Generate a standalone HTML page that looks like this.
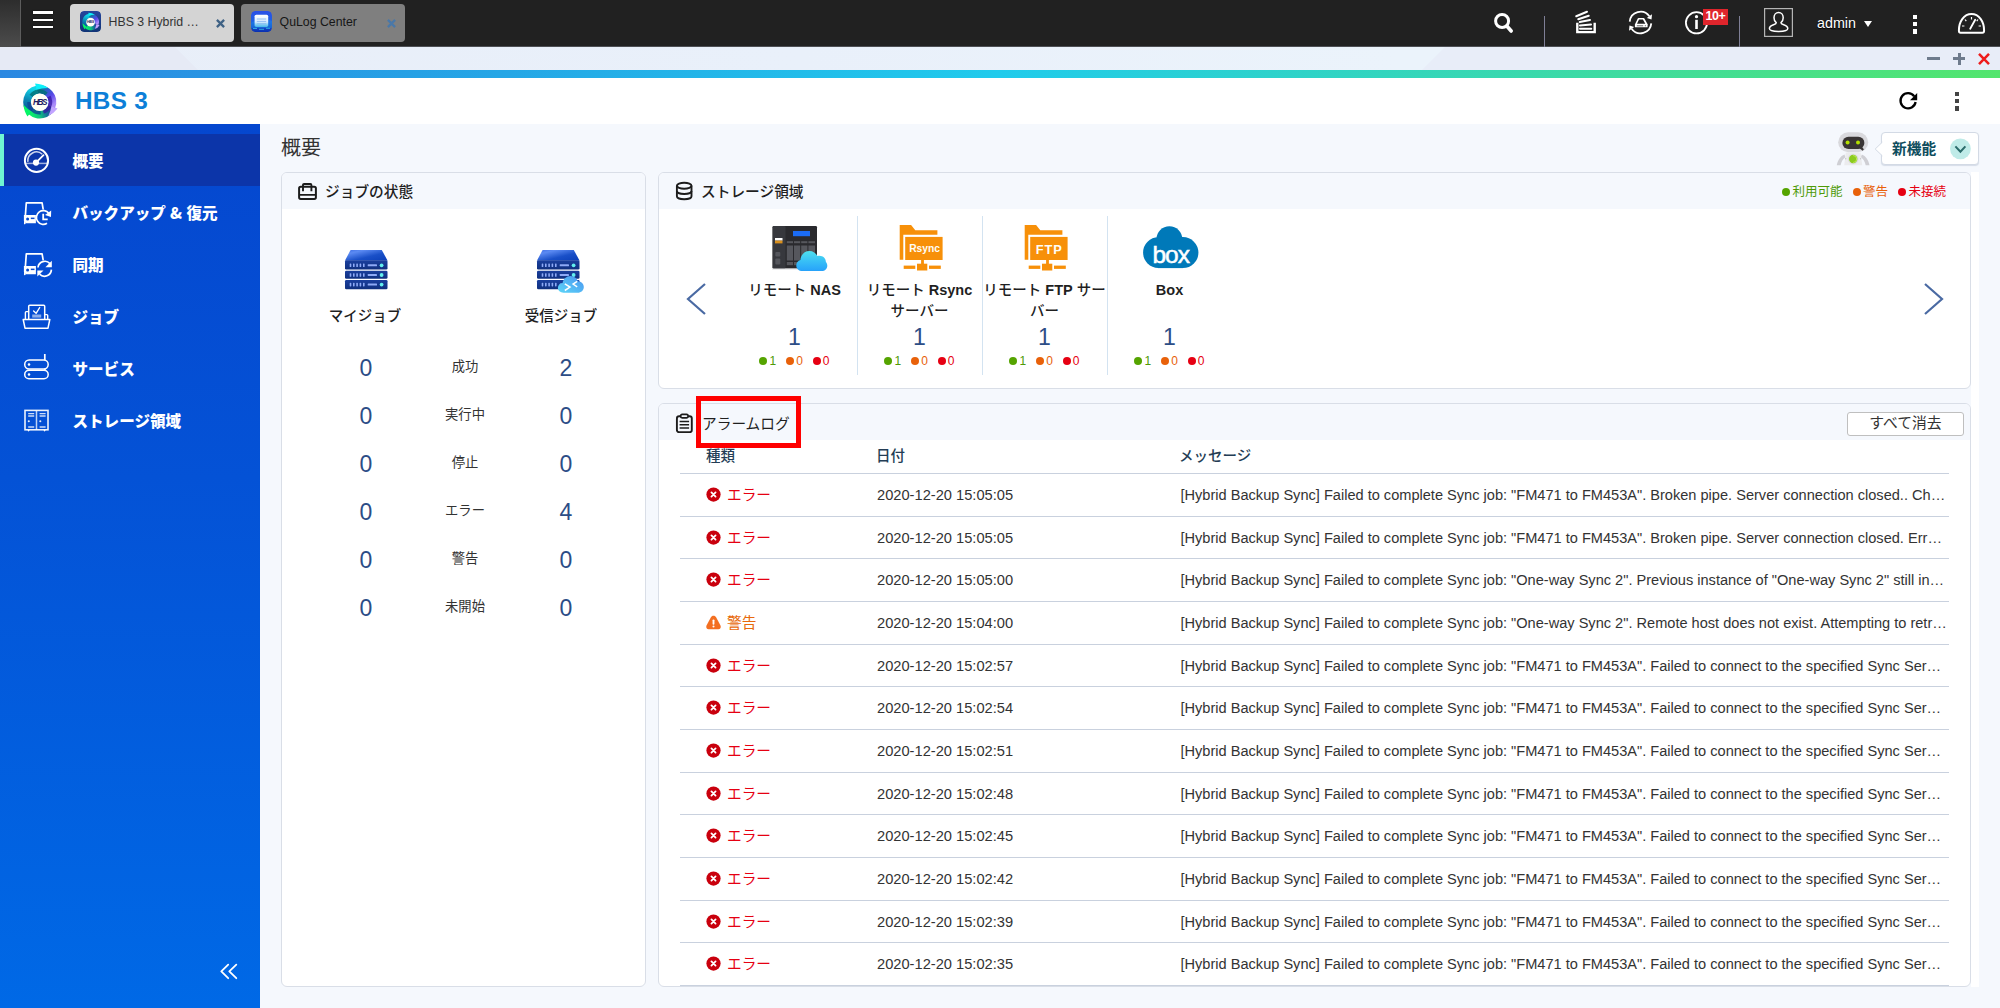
<!DOCTYPE html>
<html lang="ja">
<head>
<meta charset="utf-8">
<title>HBS 3</title>
<style>
*{box-sizing:border-box;margin:0;padding:0}
html,body{width:2000px;height:1008px;overflow:hidden;background:#f5f8fd}
body{position:relative;font-family:"Liberation Sans","Noto Sans CJK JP",sans-serif;color:#222;font-size:14px}
.abs{position:absolute}
svg{display:block;overflow:visible}
/* ---------- top OS bar ---------- */
#topbar{position:absolute;left:0;top:0;width:2000px;height:47px;background:#212121;border-bottom:1px solid #4d4f54}
#topbar .edge{position:absolute;left:0;top:0;width:21px;height:47px;background:linear-gradient(180deg,#2d2d2d,#4c4c4c);border-right:1px solid #5c5c5c}
.ham{position:absolute;left:33px;width:20.200px;height:2px;background:#fff;box-shadow:0 0 1.500px #000}
.tab{position:absolute;top:4px;height:38px;width:164px;border-radius:4px;font-size:12.5px;color:#333}
.tab .lbl{position:absolute;left:38.600px;top:10.900px;white-space:nowrap;line-height:14px}
.tab .x{position:absolute;right:8.600px;top:14.800px;width:9px;height:9px}
.tab .ico{position:absolute;left:10px;top:7.300px;width:21px;height:21px;border-radius:4px;overflow:hidden}
.vsep{position:absolute;top:16px;width:1px;height:31px;background:#7f7f96}
.tico{position:absolute}
/* ---------- window bar ---------- */
#winbar{position:absolute;left:0;top:47px;width:2000px;height:23px;background:linear-gradient(90deg,#e8eef8 0%,#e9f0fa 40%,#ebf3fb 70%);overflow:hidden}
#winbar .fl{position:absolute;left:-30px;top:0;width:205px;height:23px;background:#e6eaf5;transform:skewX(45deg);transform-origin:0 0}
#winbar .fr{position:absolute;left:1445px;top:0;width:600px;height:23px;background:#e8edf8;transform:skewX(-45deg);transform-origin:0 0}
#stripe{position:absolute;left:0;top:70px;width:2000px;height:8px;background:linear-gradient(90deg,#2b88e1 0%,#25a6e6 25%,#20cbec 50%,#38d8b0 75%,#53e56d 100%)}
/* ---------- app header ---------- */
#apphead{position:absolute;left:0;top:78px;width:2000px;height:46px;background:#fff}
#apphead .title{position:absolute;left:75px;top:9px;font-size:24.300px;font-weight:bold;color:#0d7fd8;letter-spacing:.3px;line-height:28px}
/* ---------- sidebar ---------- */
#side{position:absolute;left:0;top:124px;width:260px;height:884px;background:linear-gradient(180deg,#0547cf 0%,#0452d6 40%,#0069e6 100%)}
#side .act{position:absolute;left:0;top:10px;width:260px;height:52px;background:#0c35a9}
#side .act:before{content:"";position:absolute;left:0;top:0;width:4px;height:52px;background:#6ff5d2}
.nav{position:absolute;left:72.500px;margin-top:1.700px;color:#fff;font-weight:900;font-size:15.550px;white-space:nowrap;line-height:20px}
.nico{position:absolute;left:22px;width:30px;height:30px}
/* ---------- panels ---------- */
.panel{position:absolute;background:#fff;border:1px solid #d9dee7;border-radius:6px;overflow:hidden}
.phead{position:absolute;left:0;top:0;right:0;height:36px;background:#f5f8fd}
.ptitle{position:absolute;font-size:14.700px;color:#1f1f1f;font-weight:500;white-space:nowrap;line-height:20px}
.num{position:absolute;margin-top:.5px;margin-left:.8px;font-size:23px;color:#2c4d86;width:60px;text-align:center;line-height:26px}
.slab{position:absolute;margin-top:-.2px;font-size:13.300px;color:#333;width:80px;text-align:center;line-height:16px}
.jlab{position:absolute;margin-top:1px;font-size:14.500px;color:#1f1f1f;font-weight:500;width:120px;text-align:center;line-height:20px;white-space:nowrap}
/* storage */
.sitem{position:absolute;top:0;width:125px;height:216px}
.sitem .nm{position:absolute;left:-10px;right:-10px;top:107.400px;text-align:center;font-size:14.5px;font-weight:500;color:#1f1f1f;line-height:20.5px;white-space:nowrap}
.sitem .ct{position:absolute;left:0;right:0;top:150.500px;text-align:center;font-size:23px;color:#2c4d86;line-height:26px}
.sitem .dots{position:absolute;left:0;right:0;top:180px;text-align:center;font-size:12px;line-height:16px;white-space:nowrap}
.d{display:inline-block;width:8px;height:8px;border-radius:50%;margin-right:2px;vertical-align:0}
.dots span{margin:0 5px}
.legend{font-size:12.500px;line-height:16px;white-space:nowrap;margin-top:1px}
.legend span{margin-left:10.500px}
.nm.bx{font-weight:bold}
.g{color:#4e9a06}.o{color:#e8610a}.r{color:#e60012}
.dg{background:#55a400}.do{background:#e8610a}.dr{background:#e60012}
.ssep{position:absolute;top:43px;width:1px;height:159px;background:#d3e3f1}
/* alarm */
.th{position:absolute;top:42px;font-size:14.5px;font-weight:500;color:#243d55;line-height:20px;white-space:nowrap}
.hl{position:absolute;left:21px;width:1269px;height:1px;background:#c9d1de}
.row{position:absolute;left:21px;width:1269px;height:42.667px;border-bottom:1px solid #c9d1de;font-size:14.670px;line-height:20px;color:#333;white-space:nowrap}
.row .ti{position:absolute;left:26px;top:13px;width:15px;height:15px}
.row .ty{position:absolute;left:47px;top:11px}
.row .dt{position:absolute;left:197px;top:11px}
.row .ms{position:absolute;left:500.500px;top:11px;font-size:14.590px}
.er{color:#e60012}.wa{color:#e86a0c}
</style>
</head>
<body>

<!-- TOP BAR -->
<div id="topbar">
  <div class="edge"></div>
  <div class="ham" style="top:11.300px;height:2.500px"></div><div class="ham" style="top:18.900px;height:2.100px"></div><div class="ham" style="top:26.100px;height:2px"></div>
  <div class="tab" style="left:70px;background:#d4d4d4">
    <svg class="ico" viewBox="0 0 21 21"><defs><linearGradient id="tbg" x1="0" y1="0" x2="0" y2="1"><stop offset="0" stop-color="#27469c"/><stop offset="1" stop-color="#113476"/></linearGradient></defs><rect width="21" height="21" rx="4" fill="url(#tbg)"/>
<defs>
<linearGradient id="ta" gradientUnits="userSpaceOnUse" x1="6.5" y1="15.6" x2="9.3" y2="4.8"><stop offset="0" stop-color="#0b4f9c"/><stop offset=".45" stop-color="#0a86b4"/><stop offset="1" stop-color="#12d6e8"/></linearGradient>
<linearGradient id="tb" gradientUnits="userSpaceOnUse" x1="9.2" y1="4.9" x2="16.3" y2="13.2"><stop offset="0" stop-color="#0a7a80"/><stop offset=".3" stop-color="#2a62c8"/><stop offset=".6" stop-color="#5646e6"/><stop offset="1" stop-color="#ab8cf9"/></linearGradient>
<linearGradient id="tc" gradientUnits="userSpaceOnUse" x1="16.4" y1="13.1" x2="6.5" y2="15.5"><stop offset="0" stop-color="#2b3a9c"/><stop offset=".3" stop-color="#14709a"/><stop offset=".62" stop-color="#10bd80"/><stop offset="1" stop-color="#08ec6c"/></linearGradient>
<filter id="tf" x="-20%" y="-20%" width="140%" height="140%"><feGaussianBlur stdDeviation=".7"/></filter>
</defs>
<path d="M8.73 2.81A8.3 8.3 0 0 1 18.30 14.01L14.40 12.44A4.1 4.1 0 0 0 9.68 6.91Z" fill="url(#tb)"/>
<path d="M18.35 13.87A8.3 8.3 0 0 1 5.05 17.07L7.86 13.95A4.1 4.1 0 0 0 14.43 12.37Z" fill="url(#tc)"/>
<path d="M5.15 17.16A8.3 8.3 0 0 1 8.87 2.78L9.75 6.89A4.1 4.1 0 0 0 7.91 13.99Z" fill="url(#ta)"/>
<path d="M9.10 4.88L8.29 1.64Q12.00 1.52 14.83 3.86Q11.64 3.97 9.10 4.88Z" fill="#0cf0fa"/>
<path d="M16.43 13.02L19.57 14.16Q17.97 16.87 14.95 17.87Q16.05 15.31 16.43 13.02Z" fill="#c2a4ff"/>
<path d="M6.61 15.65L4.46 18.21Q2.39 15.64 2.51 12.33Q4.53 14.40 6.61 15.65Z" fill="#05f466"/>
<circle cx="10.6" cy="11.200000000000001" r="4.35" fill="#fffff6"/>
<text x="10.4" y="12.2" font-size="3.7" font-weight="bold" font-style="italic" fill="#1e1b62" text-anchor="middle" font-family="Liberation Sans,sans-serif" letter-spacing="-0.35">HBS</text>
</svg>
    <div class="lbl" style="font-size:12.300px">HBS 3 Hybrid …</div>
    <svg class="x" viewBox="0 0 9 9"><path d="M.9.900l7.200 7.200M8.100.900L.9 8.100" stroke="#3f6285" stroke-width="2.300"/></svg>
  </div>
  <div class="tab" style="left:241px;background:#7f7f7f;color:#161616">
    <svg class="ico" viewBox="0 0 21 21">
      <defs><linearGradient id="qa" x1="0" y1="0" x2="0" y2="1"><stop offset="0" stop-color="#2a4fe8"/><stop offset=".55" stop-color="#1e63e0"/><stop offset="1" stop-color="#0a2fb0"/></linearGradient>
      <linearGradient id="qb" x1="0" y1="0" x2="0" y2="1"><stop offset="0" stop-color="#ffffff"/><stop offset=".6" stop-color="#d8ecff"/><stop offset="1" stop-color="#5fd8f0" stop-opacity=".7"/></linearGradient></defs>
      <rect width="21" height="21" rx="4.500" fill="url(#qa)"/>
      <path d="M0 12c5-4 15-5 21-2v7H0z" fill="#1a8ae8" opacity=".45"/>
      <rect x="3.600" y="3.700" width="13.600" height="12.200" rx="1.600" fill="url(#qb)"/>
      <path d="M5.800 8h9.400M5.800 10.400h9.400M5.800 12.800h9.400" stroke="#7fb0f0" stroke-width=".8"/>
      <path d="M2 17.500h4M8 18.300h5M15 17.300h4" stroke="#39d0f0" stroke-width=".9" opacity=".8"/>
    </svg>
    <div class="lbl" style="font-size:12.300px">QuLog Center</div>
    <svg class="x" viewBox="0 0 9 9"><path d="M.9.900l7.200 7.200M8.100.900L.9 8.100" stroke="#4a78a8" stroke-width="2.300"/></svg>
  </div>

  <!-- search -->
  <svg class="tico" style="left:1492px;top:11px" width="24" height="24" viewBox="0 0 24 24"><circle cx="10.100" cy="10" r="6.500" fill="none" stroke="#fff" stroke-width="3"/><path d="M14.800 15l4.400 5" stroke="#fff" stroke-width="3.600" stroke-linecap="round"/></svg>
  <div class="vsep" style="left:1544px"></div>
  <!-- stack / tray -->
  <svg class="tico" style="left:1575px;top:10px" width="23" height="25" viewBox="0 0 23 25">
    <path d="M2.300 12.800V22.100h17.400V12.800" fill="none" stroke="#fff" stroke-width="2.400"/>
    <path d="M5 18.750h11.250" stroke="#fff" stroke-width="2" stroke-linecap="round"/>
    <path d="M5 15.500l11-1" stroke="#fff" stroke-width="2" stroke-linecap="round"/>
    <path d="M4.750 12l10.250-2" stroke="#fff" stroke-width="2" stroke-linecap="round"/>
    <path d="M3.250 9.250l10.500-3.500" stroke="#fff" stroke-width="2" stroke-linecap="round"/>
    <path d="M1.250 6.250l10.750-4.500" stroke="#fff" stroke-width="2" stroke-linecap="round"/>
  </svg>
  <!-- sync drive -->
  <svg class="tico" style="left:1628px;top:10px" width="26" height="26" viewBox="0 0 26 26">
    <path d="M1.740 11.560A10.800 10.800 0 0 1 21.350 6.300" fill="none" stroke="#fff" stroke-width="1.800"/>
    <path d="M23.260 13.440A10.800 10.800 0 0 1 3.650 18.690" fill="none" stroke="#fff" stroke-width="1.800"/>
    <path d="M24 4.200L18.800 8l4.700 1.500z" fill="#fff"/>
    <path d="M1 20.800L6.200 17l-4.700-1.500z" fill="#fff"/>
    <path d="M10.500 8.750h5l3.250 5.750h-11z" fill="none" stroke="#fff" stroke-width="1.700" stroke-linejoin="round"/>
    <rect x="6.900" y="14.300" width="12.700" height="3" rx=".5" fill="#fff"/>
    <path d="M8.800 15.800h6.400" stroke="#212121" stroke-width=".7"/><circle cx="17.300" cy="15.800" r=".55" fill="#212121"/>
  </svg>
  <!-- info -->
  <svg class="tico" style="left:1684px;top:10px" width="26" height="26" viewBox="0 0 26 26"><circle cx="12.500" cy="12.800" r="10.600" fill="none" stroke="#fff" stroke-width="1.800"/><rect x="11.200" y="9.800" width="2.600" height="9.200" fill="#fff"/><circle cx="12.500" cy="6.700" r="1.600" fill="#fff"/></svg>
  <div class="abs" style="left:1703px;top:9px;width:25px;height:16px;background:#df252c;color:#fff;font-size:12.500px;font-weight:bold;line-height:15px;text-align:center;letter-spacing:-.4px">10+</div>
  <div class="vsep" style="left:1739px"></div>
  <!-- user -->
  <svg class="tico" style="left:1764px;top:8px" width="29" height="29" viewBox="0 0 29 29"><rect x=".6" y=".6" width="27.800" height="27.800" fill="none" stroke="#b4b4b4" stroke-width="1.200"/>
    <path d="M14.600 4.600c2.700 0 4.600 2.200 4.600 5.200 0 2.100-.9 3.900-2.200 4.900 0 .9.500 1.300 2.100 1.800 2.800.9 4.700 2.100 4.700 4.100 0 1.900-2.200 2.900-9.200 2.900s-9.200-1-9.200-2.900c0-2 1.900-3.200 4.700-4.100 1.600-.5 2.100-.9 2.100-1.800-1.300-1-2.200-2.800-2.200-4.900 0-3 1.900-5.200 4.600-5.200z" fill="none" stroke="#fff" stroke-width="1.500"/></svg>
  <div class="abs" style="left:1817px;top:13px;color:#fff;font-size:14.300px;line-height:20px;text-shadow:0 1px 1px #000">admin</div>
  <div class="abs" style="left:1863.500px;top:21px;width:0;height:0;border-left:4.300px solid transparent;border-right:4.300px solid transparent;border-top:6.400px solid #fff"></div>
  <!-- dots -->
  <div class="abs" style="left:1912.500px;top:14.600px;width:4.600px;height:4.600px;background:#fff"></div>
  <div class="abs" style="left:1912.500px;top:21.700px;width:4.600px;height:4.600px;background:#fff"></div>
  <div class="abs" style="left:1912.500px;top:29px;width:4.600px;height:4.600px;background:#fff"></div>
  <!-- gauge -->
  <svg class="tico" style="left:1957px;top:12px" width="29" height="23" viewBox="0 0 29 23">
    <path d="M3.600 20.800c-1.200 0-1.700-.7-1.700-2.200C1.900 9.500 7 2 14.500 2s12.600 7.500 12.600 16.600c0 1.500-.5 2.200-1.700 2.200z" fill="none" stroke="#fff" stroke-width="2"/>
    <path d="M14.500 5v2.600M8 7.500l1.300 1.700M21 7.500l-1.300 1.700M5 14h2.400M21.600 14H24" stroke="#fff" stroke-width="1.200"/>
    <path d="M13.200 16.800l5-9" stroke="#fff" stroke-width="1.800" stroke-linecap="round"/>
  </svg>
</div>
<div id="winbar"><div class="fl"></div><div class="fr"></div>
  <div class="abs" style="left:1927px;top:10.200px;width:13px;height:3px;background:#6e7b8c"></div>
  <div class="abs" style="left:1953px;top:10.200px;width:12px;height:3px;background:#6e7b8c"></div>
  <div class="abs" style="left:1957.500px;top:6px;width:3px;height:11.500px;background:#6e7b8c"></div>
  <svg class="abs" style="left:1978px;top:6px" width="12" height="12" viewBox="0 0 12 12"><path d="M1 .8l10 10.400M11 .8L1 11.200" stroke="#ee1c1c" stroke-width="2.500"/></svg>
</div>
<div id="stripe"></div>

<!-- APP HEADER -->
<div id="apphead">
  <svg class="abs" style="left:21px;top:4px" width="38" height="39" viewBox="0 0 38 39">
<defs>
<linearGradient id="la" gradientUnits="userSpaceOnUse" x1="10.5" y1="29.4" x2="16.1" y2="7.8"><stop offset="0" stop-color="#0b4f9c"/><stop offset=".45" stop-color="#0a86b4"/><stop offset="1" stop-color="#12d6e8"/></linearGradient>
<linearGradient id="lb" gradientUnits="userSpaceOnUse" x1="15.9" y1="7.8" x2="30.3" y2="24.7"><stop offset="0" stop-color="#0a7a80"/><stop offset=".3" stop-color="#2a62c8"/><stop offset=".6" stop-color="#5646e6"/><stop offset="1" stop-color="#ab8cf9"/></linearGradient>
<linearGradient id="lc" gradientUnits="userSpaceOnUse" x1="30.4" y1="24.5" x2="10.3" y2="29.3"><stop offset="0" stop-color="#2b3a9c"/><stop offset=".3" stop-color="#14709a"/><stop offset=".62" stop-color="#10bd80"/><stop offset="1" stop-color="#08ec6c"/></linearGradient>
<filter id="lf" x="-20%" y="-20%" width="140%" height="140%"><feGaussianBlur stdDeviation=".7"/></filter>
</defs>
<path d="M14.99 3.92A16.5 16.5 0 0 1 34.00 26.18L26.58 23.18A8.5 8.5 0 0 0 16.79 11.72Z" fill="url(#lb)"/>
<path d="M34.10 25.91A16.5 16.5 0 0 1 7.66 32.26L13.01 26.32A8.5 8.5 0 0 0 26.64 23.05Z" fill="url(#lc)"/>
<path d="M7.88 32.45A16.5 16.5 0 0 1 15.27 3.86L16.93 11.69A8.5 8.5 0 0 0 13.12 26.42Z" fill="url(#la)"/>
<path d="M8.46 12.83A12.5 12.5 0 0 1 26.73 10.42L24.16 13.49A8.5 8.5 0 0 0 11.74 15.12Z" fill="#066f74" opacity=".8" filter="url(#lf)"/>
<path d="M29.53 13.75A12.5 12.5 0 0 1 22.98 31.75L21.61 27.99A8.5 8.5 0 0 0 26.06 15.75Z" fill="#3612a2" opacity=".75" filter="url(#lf)"/>
<path d="M19.79 32.45A12.5 12.5 0 0 1 6.20 20.00L10.20 20.00A8.5 8.5 0 0 0 19.44 28.47Z" fill="#0a4496" opacity=".8" filter="url(#lf)"/>
<path d="M15.68 7.87L14.11 1.59Q21.40 1.95 27.11 6.00Q20.80 5.94 15.68 7.87Z" fill="#0cf0fa"/>
<path d="M30.45 24.28L36.53 26.49Q32.89 31.49 27.36 33.85Q29.75 28.95 30.45 24.28Z" fill="#c2a4ff"/>
<path d="M10.67 29.58L6.50 34.54Q2.89 29.13 2.61 22.84Q6.39 27.11 10.67 29.58Z" fill="#05f466"/>
<circle cx="18.7" cy="20.3" r="8.75" fill="#fffff6"/>
<text x="18.5" y="23.1" font-size="8.2" font-weight="bold" font-style="italic" fill="#1e1b62" text-anchor="middle" font-family="Liberation Sans,sans-serif" letter-spacing="-1.5">HBS</text>
</svg>
  <div class="title">HBS 3</div>
  <svg class="abs" style="left:1898px;top:12.600px" width="21" height="21" viewBox="0 0 21 21"><path d="M16.200 5.200A7.600 7.600 0 1 0 17.600 11" fill="none" stroke="#000" stroke-width="2.300"/><path d="M19.200 2v7.200h-7.200z" fill="#000"/></svg>
  <div class="abs" style="left:1955px;top:13.800px;width:4.400px;height:4.400px;background:#444"></div>
  <div class="abs" style="left:1955px;top:21px;width:4.400px;height:4.400px;background:#444"></div>
  <div class="abs" style="left:1955px;top:28.300px;width:4.400px;height:4.400px;background:#444"></div>
</div>

<!-- SIDEBAR -->
<div id="side">
  <div class="act"></div>
  <!-- overview gauge : centre (36.500,160.400) abs => local y = abs-124 -->
  <svg class="abs" style="left:22px;top:22px" width="30" height="30" viewBox="0 0 30 30">
    <circle cx="14.500" cy="14.400" r="11.600" fill="none" stroke="#fff" stroke-width="2"/>
    <path d="M5.900 15.800A8.700 8.700 0 0 1 20.300 8.200" fill="none" stroke="#fff" stroke-width="1.500" opacity=".8"/>
    <path d="M3.600 17.400h21.800" stroke="#fff" stroke-width="1.500" opacity=".62"/>
    <circle cx="14" cy="16.600" r="3.100" fill="#fff"/>
    <path d="M14 16.600l7.500-7.500" stroke="#fff" stroke-width="1.800" stroke-linecap="round"/>
  </svg>
  <!-- backup & restore : abs y 200..226 => local 76..102 -->
  <svg class="abs" style="left:22px;top:74px" width="32" height="30" viewBox="0 0 32 30">
    <path d="M2.800 25.500L4.300 4.800h15.800l1 6" fill="none" stroke="#fff" stroke-width="1.700" stroke-linejoin="round" stroke-linecap="round"/>
    <path d="M1.900 17h12v8.200H4.200L1.900 23z" fill="#fff"/>
    <circle cx="5.600" cy="21" r="1.500" fill="#0849cf"/>
    <rect x="8.800" y="19.600" width="3.700" height="1.500" fill="#0849cf"/>
    <path d="M26.800 15.300A6.900 6.900 0 1 0 25 25.300" fill="none" stroke="#fff" stroke-width="1.700"/>
    <path d="M29.200 12.600l-.2 6.400-6-1.900z" fill="#fff"/>
    <path d="M21.200 15.800v5.600h4.500" fill="none" stroke="#fff" stroke-width="1.800"/>
  </svg>
  <!-- sync : abs y 252..278 => local 128..154 -->
  <svg class="abs" style="left:22px;top:126px" width="32" height="30" viewBox="0 0 32 30">
    <path d="M2.800 24.500L4.300 3.900h15.800l1 5.800" fill="none" stroke="#fff" stroke-width="1.700" stroke-linejoin="round" stroke-linecap="round"/>
    <path d="M1.900 16h12v8.200H4.200L1.900 22z" fill="#fff"/>
    <circle cx="5.600" cy="20" r="1.500" fill="#0849cf"/>
    <rect x="8.800" y="18.600" width="3.700" height="1.500" fill="#0849cf"/>
    <path d="M16 17.500A6.900 6.900 0 0 1 28 13.600" fill="none" stroke="#fff" stroke-width="1.700"/>
    <path d="M29.800 10.800v6.400h-6.400z" fill="#fff"/>
    <path d="M29.400 19.600A6.900 6.900 0 0 1 17.600 24.200" fill="none" stroke="#fff" stroke-width="1.700"/>
    <path d="M15.300 26.600v-6.200h6.200z" fill="#fff"/>
  </svg>
  <!-- job : abs y 304..329 => local 180..205 -->
  <svg class="abs" style="left:22px;top:179px" width="30" height="28" viewBox="0 0 30 28">
    <path d="M1.200 16.500h26.600L26 25.200H3z" fill="none" stroke="#fff" stroke-width="1.500" stroke-linejoin="round"/>
    <path d="M6.700 16.500V3.200a1 1 0 0 1 1-1h14a1 1 0 0 1 1 1v13.300" fill="none" stroke="#fff" stroke-width="1.500"/>
    <path d="M3.400 16.500V9.400a.8.800 0 0 1 .8-.8h2.500" fill="none" stroke="#fff" stroke-width="1.400"/>
    <path d="M22.700 11.600h2.200a.8.800 0 0 1 .8.800v4.100" fill="none" stroke="#fff" stroke-width="1.400"/>
    <path d="M11.600 8l2.500 2.300 3.600-5.800" fill="none" stroke="#fff" stroke-width="1.400" stroke-linecap="round" stroke-linejoin="round"/>
    <rect x="10.200" y="11.500" width="9" height="3.100" fill="#fff" opacity=".55"/>
  </svg>
  <!-- service : abs y 354..379 => local 230..255 -->
  <svg class="abs" style="left:22px;top:228px" width="30" height="30" viewBox="0 0 30 30">
    <rect x="2.700" y="8" width="23.500" height="8.900" rx="4.450" fill="none" stroke="#fff" stroke-width="1.500"/>
    <rect x="2.700" y="18.200" width="23.500" height="8.500" rx="4.250" fill="none" stroke="#fff" stroke-width="1.500"/>
    <path d="M22.800 2v6.200M22.800 16.800v1.600" stroke="#fff" stroke-width="1.700"/>
    <circle cx="7" cy="12.400" r="1.250" fill="#fff"/><circle cx="7" cy="22.600" r="1.250" fill="#fff"/>
  </svg>
  <!-- storage : abs y 409..432 => local 285..308 -->
  <svg class="abs" style="left:22px;top:284px" width="30" height="26" viewBox="0 0 30 26">
    <rect x="3" y="2.400" width="23" height="19.400" fill="none" stroke="#fff" stroke-width="1.600" opacity=".92"/>
    <path d="M14.500 2.400v19.400" stroke="#fff" stroke-width="1.500" opacity=".75"/>
    <path d="M6.200 5.600h6M6.200 8h6M6.200 19h6M17.600 5.600h6M17.600 8h6M17.600 19h6" stroke="#fff" stroke-width="1.400" opacity=".8"/>
    <circle cx="6.800" cy="13.200" r="1.050" fill="#fff" opacity=".9"/><circle cx="18.300" cy="13.200" r="1.050" fill="#fff" opacity=".9"/>
    <path d="M5.300 21.800h2.600l-1.300 2zM21.300 21.800h2.600l-1.300 2z" fill="#fff"/>
  </svg>
  <div class="nav" style="top:26px">概要</div>
  <div class="nav" style="top:78px">バックアップ <span style="font-family:'Noto Sans CJK JP',sans-serif;line-height:0">&amp;</span> 復元</div>
  <div class="nav" style="top:130px">同期</div>
  <div class="nav" style="top:182px">ジョブ</div>
  <div class="nav" style="top:234px">サービス</div>
  <div class="nav" style="top:286px">ストレージ領域</div>
  <svg class="abs" style="left:220px;top:838px" width="18" height="18" viewBox="0 0 18 18"><path d="M8.200 2.700L1.300 9.400l6.900 6.800M16.300 2.700L9.300 9.400l7 6.800" fill="none" stroke="#fff" stroke-width="1.800" stroke-linecap="round" stroke-linejoin="round"/></svg>
</div>

<!-- MAIN -->
<div class="abs" style="left:281px;top:134px;font-size:20px;color:#333;line-height:28px">概要</div>

<div class="abs" style="left:1971px;top:172px;width:8px;height:815px;background:#fff"></div>
<!-- robot + new features -->
<svg class="abs" style="left:1835px;top:131px" width="37" height="36" viewBox="0 0 37 36">
  <path d="M9.500 23.500C5.500 25 2.800 29 1.800 34.200h3.800c.8-3.600 2.300-6.300 4.800-8zM26.800 23.500c4 1.500 6.700 5.500 7.700 10.700h-3.800c-.8-3.600-2.300-6.300-4.800-8z" fill="#cfcfd4"/>
  <path d="M10.800 21.500h14.800l1.600 12.700H9.200z" fill="#ebebed"/>
  <rect x="3.200" y="1.200" width="30" height="20" rx="10" fill="#d9d9dd"/>
  <rect x="7.400" y="5.800" width="22" height="12.200" rx="6.100" fill="#393535"/>
  <path d="M23.500 16.500l4.200 3.300 1.200-1.600-2.800-3z" fill="#393535"/>
  <circle cx="12.600" cy="11.600" r="2" fill="#b4e000"/><circle cx="23" cy="11.600" r="2" fill="#b4e000"/>
  <circle cx="18.200" cy="28" r="5.300" fill="#dcdce0"/>
  <circle cx="18.200" cy="28" r="4.200" fill="#8ccb1e"/>
  <path d="M18.200 24.500a3.500 3.500 0 0 1 0 7" fill="none" stroke="#c8f060" stroke-width="1" opacity=".8"/>
  <circle cx="10.700" cy="27.800" r=".7" fill="#c4c4c8"/><circle cx="25.600" cy="27.800" r=".7" fill="#c4c4c8"/>
</svg>
<div class="abs" style="left:1881px;top:132px;width:98px;height:33px;background:#fff;border:1px solid #d3dae5;border-radius:4px;box-shadow:0 1px 1px rgba(120,140,170,.25)"></div>
<svg class="abs" style="left:1874px;top:141px" width="9" height="16" viewBox="0 0 9 16"><path d="M8.800.8L1.200 8l7.600 7.200z" fill="#fff"/><path d="M8.300 1.200L1.200 8l7.100 6.800" fill="none" stroke="#d3dae5" stroke-width="1"/></svg>
<div class="abs" style="left:1892px;top:139px;font-size:14.700px;font-weight:bold;color:#0e4d5d;line-height:20px;white-space:nowrap">新機能</div>
<svg class="abs" style="left:1950px;top:138px" width="21" height="21" viewBox="0 0 21 21"><circle cx="10.400" cy="10.800" r="10.400" fill="#bfebe8"/><path d="M5.400 8.400l5 5.400 5-5.400" fill="none" stroke="#2a6b6b" stroke-width="2"/></svg>

<!-- JOB PANEL -->
<div class="panel" id="jobs" style="left:281px;top:172px;width:365px;height:815px">
  <div class="phead"></div>
  <svg class="abs" style="left:16px;top:10px" width="20" height="18" viewBox="0 0 20 18"><rect x="1.100" y="3.700" width="16.800" height="12.200" rx="1.600" fill="none" stroke="#1c1c1c" stroke-width="2"/><path d="M5 8.200V2a1 1 0 0 1 1-1h6.400a1 1 0 0 1 1 1v6.200" fill="none" stroke="#1c1c1c" stroke-width="1.900"/><path d="M1.100 11.900h16.800" stroke="#1c1c1c" stroke-width="1.900"/></svg>
  <div class="ptitle" style="left:43px;top:9px">ジョブの状態</div>
  <svg class="abs" style="left:63px;top:77px" width="48" height="44" viewBox="0 0 48 44"><defs><linearGradient id="s1t" x1="0" y1="0" x2="1" y2="1"><stop offset="0" stop-color="#3f6fe6"/><stop offset=".22" stop-color="#5b8af2"/><stop offset=".6" stop-color="#1a50c8"/><stop offset="1" stop-color="#0b3fb8"/></linearGradient><linearGradient id="s1u" x1="0" y1="0" x2="0" y2="1"><stop offset="0" stop-color="#1a3f9e"/><stop offset="1" stop-color="#10307f"/></linearGradient><linearGradient id="s1c" x1="0" y1="1" x2="1" y2="0"><stop offset="0" stop-color="#5cd6f8"/><stop offset="1" stop-color="#4a94f0"/></linearGradient></defs><path d="M5.600 0h31.200L42.500 10.500H0z" fill="url(#s1t)"/><rect x="0" y="10.2" width="42.500" height="9.4" rx="1.300" fill="url(#s1u)"/><rect x="4.7" y="13.5" width="1.600" height="3.600" rx=".6" fill="#8eaaf6"/><rect x="8.0" y="13.5" width="1.600" height="3.600" rx=".6" fill="#8eaaf6"/><rect x="11.3" y="13.5" width="1.600" height="3.600" rx=".6" fill="#8eaaf6"/><rect x="14.6" y="13.5" width="1.600" height="3.600" rx=".6" fill="#8eaaf6"/><rect x="18.0" y="13.5" width="1.600" height="3.600" rx=".6" fill="#8eaaf6"/><rect x="22.700" y="14.3" width="9.300" height="2" rx=".4" fill="#8eaaf6"/><circle cx="36.600" cy="15.3" r="1.900" fill="#62f0ee"/><rect x="0" y="20.7" width="42.500" height="8.1" rx="1.300" fill="url(#s1u)"/><rect x="4.7" y="23.2" width="1.600" height="3.600" rx=".6" fill="#8eaaf6"/><rect x="8.0" y="23.2" width="1.600" height="3.600" rx=".6" fill="#8eaaf6"/><rect x="11.3" y="23.2" width="1.600" height="3.600" rx=".6" fill="#8eaaf6"/><rect x="14.6" y="23.2" width="1.600" height="3.600" rx=".6" fill="#8eaaf6"/><rect x="18.0" y="23.2" width="1.600" height="3.600" rx=".6" fill="#8eaaf6"/><rect x="22.700" y="24.0" width="9.300" height="2" rx=".4" fill="#8eaaf6"/><circle cx="36.600" cy="25.0" r="1.900" fill="#62f0ee"/><rect x="0" y="29.9" width="42.500" height="9.3" rx="1.300" fill="url(#s1u)"/><rect x="4.7" y="32.8" width="1.600" height="3.600" rx=".6" fill="#8eaaf6"/><rect x="8.0" y="32.8" width="1.600" height="3.600" rx=".6" fill="#8eaaf6"/><rect x="11.3" y="32.8" width="1.600" height="3.600" rx=".6" fill="#8eaaf6"/><rect x="14.6" y="32.8" width="1.600" height="3.600" rx=".6" fill="#8eaaf6"/><rect x="18.0" y="32.8" width="1.600" height="3.600" rx=".6" fill="#8eaaf6"/><rect x="22.700" y="33.6" width="9.300" height="2" rx=".4" fill="#8eaaf6"/><circle cx="36.600" cy="34.6" r="1.900" fill="#62f0ee"/></svg>
  <svg class="abs" style="left:254.800px;top:77px" width="48" height="44" viewBox="0 0 48 44"><defs><linearGradient id="s2t" x1="0" y1="0" x2="1" y2="1"><stop offset="0" stop-color="#3f6fe6"/><stop offset=".22" stop-color="#5b8af2"/><stop offset=".6" stop-color="#1a50c8"/><stop offset="1" stop-color="#0b3fb8"/></linearGradient><linearGradient id="s2u" x1="0" y1="0" x2="0" y2="1"><stop offset="0" stop-color="#1a3f9e"/><stop offset="1" stop-color="#10307f"/></linearGradient><linearGradient id="s2c" x1="0" y1="1" x2="1" y2="0"><stop offset="0" stop-color="#5cd6f8"/><stop offset="1" stop-color="#4a94f0"/></linearGradient></defs><path d="M5.600 0h31.200L42.500 10.500H0z" fill="url(#s2t)"/><rect x="0" y="10.2" width="42.500" height="9.4" rx="1.300" fill="url(#s2u)"/><rect x="4.7" y="13.5" width="1.600" height="3.600" rx=".6" fill="#8eaaf6"/><rect x="8.0" y="13.5" width="1.600" height="3.600" rx=".6" fill="#8eaaf6"/><rect x="11.3" y="13.5" width="1.600" height="3.600" rx=".6" fill="#8eaaf6"/><rect x="14.6" y="13.5" width="1.600" height="3.600" rx=".6" fill="#8eaaf6"/><rect x="18.0" y="13.5" width="1.600" height="3.600" rx=".6" fill="#8eaaf6"/><rect x="22.700" y="14.3" width="9.300" height="2" rx=".4" fill="#8eaaf6"/><circle cx="36.600" cy="15.3" r="1.900" fill="#62f0ee"/><rect x="0" y="20.7" width="42.500" height="8.1" rx="1.300" fill="url(#s2u)"/><rect x="4.7" y="23.2" width="1.600" height="3.600" rx=".6" fill="#8eaaf6"/><rect x="8.0" y="23.2" width="1.600" height="3.600" rx=".6" fill="#8eaaf6"/><rect x="11.3" y="23.2" width="1.600" height="3.600" rx=".6" fill="#8eaaf6"/><rect x="14.6" y="23.2" width="1.600" height="3.600" rx=".6" fill="#8eaaf6"/><rect x="18.0" y="23.2" width="1.600" height="3.600" rx=".6" fill="#8eaaf6"/><rect x="22.700" y="24.0" width="9.300" height="2" rx=".4" fill="#8eaaf6"/><circle cx="36.600" cy="25.0" r="1.900" fill="#62f0ee"/><rect x="0" y="29.9" width="42.500" height="9.3" rx="1.300" fill="url(#s2u)"/><rect x="4.7" y="32.8" width="1.600" height="3.600" rx=".6" fill="#8eaaf6"/><rect x="8.0" y="32.8" width="1.600" height="3.600" rx=".6" fill="#8eaaf6"/><rect x="11.3" y="32.8" width="1.600" height="3.600" rx=".6" fill="#8eaaf6"/><rect x="14.6" y="32.8" width="1.600" height="3.600" rx=".6" fill="#8eaaf6"/><rect x="18.0" y="32.8" width="1.600" height="3.600" rx=".6" fill="#8eaaf6"/><rect x="22.700" y="33.6" width="9.300" height="2" rx=".4" fill="#8eaaf6"/><circle cx="36.600" cy="34.6" r="1.900" fill="#62f0ee"/><path d="M26.500 42.700c-3.200 0-5.600-2.100-5.600-4.900 0-2.600 2-4.600 4.700-4.800.6-3.900 3.800-6.900 7.900-6.900 3.400 0 6.300 2.100 7.400 5.100 3.300.2 5.900 2.600 5.900 5.700 0 3.300-2.700 5.800-6.200 5.800z" fill="url(#s2c)"/><path d="M27.800 33.800l5.200 3.300-5.200 3.400" fill="none" stroke="#fff" stroke-width="1.500"/><path d="M40.200 31.300l-4.200 2.800 4.200 2.800" fill="none" stroke="#fff" stroke-width="1.400"/></svg>
  <div class="jlab" style="left:23px;top:132px">マイジョブ</div>
  <div class="jlab" style="left:219px;top:132px">受信ジョブ</div>
  <div class="num" style="left:53px;top:181px">0</div><div class="slab" style="left:143px;top:186px">成功</div><div class="num" style="left:253px;top:181px">2</div>
  <div class="num" style="left:53px;top:229px">0</div><div class="slab" style="left:143px;top:234px">実行中</div><div class="num" style="left:253px;top:229px">0</div>
  <div class="num" style="left:53px;top:277px">0</div><div class="slab" style="left:143px;top:282px">停止</div><div class="num" style="left:253px;top:277px">0</div>
  <div class="num" style="left:53px;top:325px">0</div><div class="slab" style="left:143px;top:330px">エラー</div><div class="num" style="left:253px;top:325px">4</div>
  <div class="num" style="left:53px;top:373px">0</div><div class="slab" style="left:143px;top:378px">警告</div><div class="num" style="left:253px;top:373px">0</div>
  <div class="num" style="left:53px;top:421px">0</div><div class="slab" style="left:143px;top:426px">未開始</div><div class="num" style="left:253px;top:421px">0</div>
</div>

<!-- STORAGE PANEL -->
<div class="panel" id="stor" style="left:658px;top:172px;width:1313px;height:217px">
  <div class="phead"></div>
  <svg class="abs" style="left:16px;top:8px" width="19" height="20" viewBox="0 0 19 20"><ellipse cx="9.200" cy="4.700" rx="7.300" ry="3" fill="none" stroke="#1c1c1c" stroke-width="1.900"/><path d="M1.900 4.700v10.600c0 1.700 3.300 3 7.300 3s7.300-1.300 7.300-3V4.700" fill="none" stroke="#1c1c1c" stroke-width="1.900"/><path d="M1.900 10c0 1.700 3.300 3 7.300 3s7.300-1.300 7.300-3" fill="none" stroke="#1c1c1c" stroke-width="1.900"/></svg>
  <div class="ptitle" style="left:42px;top:9px">ストレージ領域</div>
  <div class="abs legend" style="right:24px;top:10px"><span class="g"><i class="d dg"></i>利用可能</span><span class="o"><i class="d do"></i>警告</span><span class="r"><i class="d dr"></i>未接続</span></div>
  <svg class="abs" style="left:27px;top:110px" width="20" height="32" viewBox="0 0 20 32"><path d="M19 1L2 16l17 15" fill="none" stroke="#4a6aa3" stroke-width="2.200"/></svg>
  <svg class="abs" style="left:1265px;top:110px" width="20" height="32" viewBox="0 0 20 32"><path d="M1 1l17 15L1 31" fill="none" stroke="#4a6aa3" stroke-width="2.200"/></svg>
  <div class="sitem" style="left:73px"><svg class="abs" style="left:40px;top:52px" width="56" height="47" viewBox="0 0 56 47"><defs><linearGradient id="ncl" x1="0" y1="0" x2="0" y2="1"><stop offset="0" stop-color="#4fe0ee"/><stop offset=".5" stop-color="#38c0f6"/><stop offset="1" stop-color="#27a2fa"/></linearGradient></defs>
<rect x=".6" y="1" width="44.400" height="42.500" rx="1.200" fill="#2a2a2e"/>
<rect x=".6" y="1" width="12.900" height="42.500" rx="1.200" fill="#37383d"/>
<path d="M.2 44h30" stroke="#cfcfd2" stroke-width=".8"/>
<rect x="21" y="6" width="17" height="5.200" fill="#1b6cf6"/>
<rect x="3" y="13" width="7.500" height="2.600" fill="#fff"/><rect x="3" y="15.600" width="7.500" height="2.800" fill="#d9901c"/>
<rect x="3.300" y="27" width="5" height="4.500" rx="1" fill="#55565c"/><rect x="3.300" y="33.500" width="5" height="6" rx="1" fill="#55565c"/>
<g fill="#56575d"><rect x="14.800" y="16.200" width="6.200" height="2" /><rect x="22" y="16.200" width="6.200" height="2"/><rect x="29.200" y="16.200" width="6.200" height="2"/><rect x="36.400" y="16.200" width="6.600" height="2"/>
<rect x="14.800" y="20.500" width="6.200" height="15"/><rect x="22" y="20.500" width="6.200" height="15"/><rect x="29.200" y="20.500" width="6.200" height="15"/><rect x="36.400" y="20.500" width="6.600" height="15"/>
<rect x="14.800" y="37" width="6.200" height="3.200"/><rect x="22" y="37" width="6.200" height="3.200"/></g>
<path d="M30.500 46c-3.600 0-6.200-2.500-6.200-5.600 0-2.600 1.700-4.700 4.100-5.400.3-5.100 4.200-9 9-9 3.500 0 6.500 2 8 5 .7-.2 1.400-.3 2.100-.3 3.600 0 6.400 2.800 6.400 6.300.9 1 1.400 2.300 1.400 3.700 0 3-2.400 5.300-5.500 5.300z" fill="url(#ncl)"/></svg><div class="nm">リモート <b>NAS</b></div><div class="ct">1</div><div class="dots"><span class="g"><i class="d dg"></i>1</span><span class="o"><i class="d do"></i>0</span><span class="r"><i class="d dr"></i>0</span></div></div>
  <div class="ssep" style="left:198px"></div>
  <div class="sitem" style="left:198px"><svg class="abs" style="left:42px;top:51px" width="45" height="47" viewBox="0 0 45 47"><path d="M.7 1h11.400l4.200 5.200h22.100v4.500H4.300v25.100H.7z" fill="#f79009"/><rect x="6.200" y="12.900" width="37.400" height="23.100" fill="#f79009"/><rect x="22.100" y="35.500" width="2.800" height="5" fill="#f79009"/><rect x="18" y="39.700" width="10.300" height="6.800" fill="#f79009"/><rect x="4.700" y="41.600" width="11.600" height="3.300" fill="#f79009"/><rect x="30" y="41.600" width="11.800" height="3.300" fill="#f79009"/><text x="25.6" y="28.4" font-size="10.3" font-weight="bold" fill="#fffdf6" text-anchor="middle" letter-spacing="0" font-family="Liberation Sans,sans-serif">Rsync</text></svg><div class="nm">リモート <b>Rsync</b><br>サーバー</div><div class="ct">1</div><div class="dots"><span class="g"><i class="d dg"></i>1</span><span class="o"><i class="d do"></i>0</span><span class="r"><i class="d dr"></i>0</span></div></div>
  <div class="ssep" style="left:323px"></div>
  <div class="sitem" style="left:323px"><svg class="abs" style="left:42px;top:51px" width="45" height="47" viewBox="0 0 45 47"><path d="M.7 1h11.400l4.200 5.200h22.100v4.500H4.300v25.100H.7z" fill="#f79009"/><rect x="6.200" y="12.900" width="37.400" height="23.100" fill="#f79009"/><rect x="22.100" y="35.500" width="2.800" height="5" fill="#f79009"/><rect x="18" y="39.700" width="10.300" height="6.800" fill="#f79009"/><rect x="4.700" y="41.600" width="11.600" height="3.300" fill="#f79009"/><rect x="30" y="41.600" width="11.800" height="3.300" fill="#f79009"/><text x="25.2" y="30" font-size="12.8" font-weight="bold" fill="#fffdf6" text-anchor="middle" letter-spacing="0.9" font-family="Liberation Sans,sans-serif">FTP</text></svg><div class="nm">リモート <b>FTP</b> サー<br>バー</div><div class="ct">1</div><div class="dots"><span class="g"><i class="d dg"></i>1</span><span class="o"><i class="d do"></i>0</span><span class="r"><i class="d dr"></i>0</span></div></div>
  <div class="ssep" style="left:448px"></div>
  <div class="sitem" style="left:448px"><svg class="abs" style="left:36px;top:53px" width="56" height="43" viewBox="0 0 56 43"><circle cx="15.400" cy="26.600" r="15.300" fill="#0079b9"/><circle cx="39.900" cy="26.600" r="15.500" fill="#0079b9"/><circle cx="26.400" cy="13.100" r="12.900" fill="#0079b9"/><rect x="15" y="14" width="25" height="28.100" fill="#0079b9"/>
<text x="27.700" y="37.200" font-size="24.500" fill="#fff" stroke="#fff" stroke-width=".5" text-anchor="middle" letter-spacing="-1.100" font-family="Liberation Sans,sans-serif">box</text></svg><div class="nm bx">Box</div><div class="ct">1</div><div class="dots"><span class="g"><i class="d dg"></i>1</span><span class="o"><i class="d do"></i>0</span><span class="r"><i class="d dr"></i>0</span></div></div>
</div>

<!-- ALARM PANEL -->
<div class="abs" style="left:696px;top:396px;width:105px;height:52px;border:5px solid #ff0000;z-index:5"></div>
<div class="panel" id="alarm" style="left:658px;top:403px;width:1313px;height:584px">
  <div class="phead"></div>
  <svg class="abs" style="left:16px;top:9px" width="19" height="21" viewBox="0 0 19 21"><rect x="1.900" y="3.300" width="14.900" height="15.800" rx="2.200" fill="none" stroke="#1c1c1c" stroke-width="1.900"/><rect x="5.600" y="1.300" width="7.500" height="3.600" rx="1.600" fill="#f5f8fd" stroke="#1c1c1c" stroke-width="1.700"/><path d="M4.600 8.600h9.500M4.600 11.800h9.500M4.600 15h9.500" stroke="#1c1c1c" stroke-width="1.500"/></svg>
  <div class="ptitle" style="left:43px;top:10px;font-weight:400">アラームログ</div>
  <div class="abs" style="left:1188px;top:8px;width:117px;height:24px;border:1px solid #bfbfbf;border-radius:3px;background:#fff;font-size:14.800px;line-height:21.500px;text-align:center;color:#333">すべて消去</div>
  <div class="th" style="left:47px">種類</div>
  <div class="th" style="left:217px">日付</div>
  <div class="th" style="left:520px">メッセージ</div>
  <div class="hl" style="top:69px"></div>
<div class="row" style="top:70.0px"><svg class="ti" viewBox="0 0 16 16"><circle cx="8" cy="8" r="7.6" fill="#c9000d"/><path d="M5.800 5.800l4.400 4.400M10.200 5.800l-4.400 4.400" stroke="#fff" stroke-width="1.900" stroke-linecap="round"/></svg><span class="ty er">エラー</span><span class="dt">2020-12-20 15:05:05</span><span class="ms">[Hybrid Backup Sync] Failed to complete Sync job: &quot;FM471 to FM453A&quot;. Broken pipe. Server connection closed.. Ch…</span></div>
<div class="row" style="top:112.67px"><svg class="ti" viewBox="0 0 16 16"><circle cx="8" cy="8" r="7.6" fill="#c9000d"/><path d="M5.800 5.800l4.400 4.400M10.200 5.800l-4.400 4.400" stroke="#fff" stroke-width="1.900" stroke-linecap="round"/></svg><span class="ty er">エラー</span><span class="dt">2020-12-20 15:05:05</span><span class="ms">[Hybrid Backup Sync] Failed to complete Sync job: &quot;FM471 to FM453A&quot;. Broken pipe. Server connection closed. Err…</span></div>
<div class="row" style="top:155.33px"><svg class="ti" viewBox="0 0 16 16"><circle cx="8" cy="8" r="7.6" fill="#c9000d"/><path d="M5.800 5.800l4.400 4.400M10.200 5.800l-4.400 4.400" stroke="#fff" stroke-width="1.900" stroke-linecap="round"/></svg><span class="ty er">エラー</span><span class="dt">2020-12-20 15:05:00</span><span class="ms">[Hybrid Backup Sync] Failed to complete Sync job: &quot;One-way Sync 2&quot;. Previous instance of &quot;One-way Sync 2&quot; still in…</span></div>
<div class="row" style="top:198.0px"><svg class="ti" viewBox="0 0 16 16"><path d="M8 .7c1.300 0 2.200.7 2.900 1.900l4.300 8c1.300 2.500.1 4.700-2.800 4.700H3.600c-2.900 0-4.100-2.200-2.800-4.700l4.300-8C5.800 1.400 6.700.7 8 .7z" fill="#f36f21"/><rect x="7" y="4.700" width="2" height="5.600" rx=".9" fill="#fff"/><circle cx="8" cy="12.300" r="1.100" fill="#fff"/></svg><span class="ty wa">警告</span><span class="dt">2020-12-20 15:04:00</span><span class="ms">[Hybrid Backup Sync] Failed to complete Sync job: &quot;One-way Sync 2&quot;. Remote host does not exist. Attempting to retr…</span></div>
<div class="row" style="top:240.67px"><svg class="ti" viewBox="0 0 16 16"><circle cx="8" cy="8" r="7.6" fill="#c9000d"/><path d="M5.800 5.800l4.400 4.400M10.200 5.800l-4.400 4.400" stroke="#fff" stroke-width="1.900" stroke-linecap="round"/></svg><span class="ty er">エラー</span><span class="dt">2020-12-20 15:02:57</span><span class="ms">[Hybrid Backup Sync] Failed to complete Sync job: &quot;FM471 to FM453A&quot;. Failed to connect to the specified Sync Ser…</span></div>
<div class="row" style="top:283.34px"><svg class="ti" viewBox="0 0 16 16"><circle cx="8" cy="8" r="7.6" fill="#c9000d"/><path d="M5.800 5.800l4.400 4.400M10.200 5.800l-4.400 4.400" stroke="#fff" stroke-width="1.900" stroke-linecap="round"/></svg><span class="ty er">エラー</span><span class="dt">2020-12-20 15:02:54</span><span class="ms">[Hybrid Backup Sync] Failed to complete Sync job: &quot;FM471 to FM453A&quot;. Failed to connect to the specified Sync Ser…</span></div>
<div class="row" style="top:326.0px"><svg class="ti" viewBox="0 0 16 16"><circle cx="8" cy="8" r="7.6" fill="#c9000d"/><path d="M5.800 5.800l4.400 4.400M10.200 5.800l-4.400 4.400" stroke="#fff" stroke-width="1.900" stroke-linecap="round"/></svg><span class="ty er">エラー</span><span class="dt">2020-12-20 15:02:51</span><span class="ms">[Hybrid Backup Sync] Failed to complete Sync job: &quot;FM471 to FM453A&quot;. Failed to connect to the specified Sync Ser…</span></div>
<div class="row" style="top:368.67px"><svg class="ti" viewBox="0 0 16 16"><circle cx="8" cy="8" r="7.6" fill="#c9000d"/><path d="M5.800 5.800l4.400 4.400M10.200 5.800l-4.400 4.400" stroke="#fff" stroke-width="1.900" stroke-linecap="round"/></svg><span class="ty er">エラー</span><span class="dt">2020-12-20 15:02:48</span><span class="ms">[Hybrid Backup Sync] Failed to complete Sync job: &quot;FM471 to FM453A&quot;. Failed to connect to the specified Sync Ser…</span></div>
<div class="row" style="top:411.34px"><svg class="ti" viewBox="0 0 16 16"><circle cx="8" cy="8" r="7.6" fill="#c9000d"/><path d="M5.800 5.800l4.400 4.400M10.200 5.800l-4.400 4.400" stroke="#fff" stroke-width="1.900" stroke-linecap="round"/></svg><span class="ty er">エラー</span><span class="dt">2020-12-20 15:02:45</span><span class="ms">[Hybrid Backup Sync] Failed to complete Sync job: &quot;FM471 to FM453A&quot;. Failed to connect to the specified Sync Ser…</span></div>
<div class="row" style="top:454.0px"><svg class="ti" viewBox="0 0 16 16"><circle cx="8" cy="8" r="7.6" fill="#c9000d"/><path d="M5.800 5.800l4.400 4.400M10.200 5.800l-4.400 4.400" stroke="#fff" stroke-width="1.900" stroke-linecap="round"/></svg><span class="ty er">エラー</span><span class="dt">2020-12-20 15:02:42</span><span class="ms">[Hybrid Backup Sync] Failed to complete Sync job: &quot;FM471 to FM453A&quot;. Failed to connect to the specified Sync Ser…</span></div>
<div class="row" style="top:496.67px"><svg class="ti" viewBox="0 0 16 16"><circle cx="8" cy="8" r="7.6" fill="#c9000d"/><path d="M5.800 5.800l4.400 4.400M10.200 5.800l-4.400 4.400" stroke="#fff" stroke-width="1.900" stroke-linecap="round"/></svg><span class="ty er">エラー</span><span class="dt">2020-12-20 15:02:39</span><span class="ms">[Hybrid Backup Sync] Failed to complete Sync job: &quot;FM471 to FM453A&quot;. Failed to connect to the specified Sync Ser…</span></div>
<div class="row" style="top:539.34px"><svg class="ti" viewBox="0 0 16 16"><circle cx="8" cy="8" r="7.6" fill="#c9000d"/><path d="M5.800 5.800l4.400 4.400M10.200 5.800l-4.400 4.400" stroke="#fff" stroke-width="1.900" stroke-linecap="round"/></svg><span class="ty er">エラー</span><span class="dt">2020-12-20 15:02:35</span><span class="ms">[Hybrid Backup Sync] Failed to complete Sync job: &quot;FM471 to FM453A&quot;. Failed to connect to the specified Sync Ser…</span></div>
</div>

</body>
</html>
